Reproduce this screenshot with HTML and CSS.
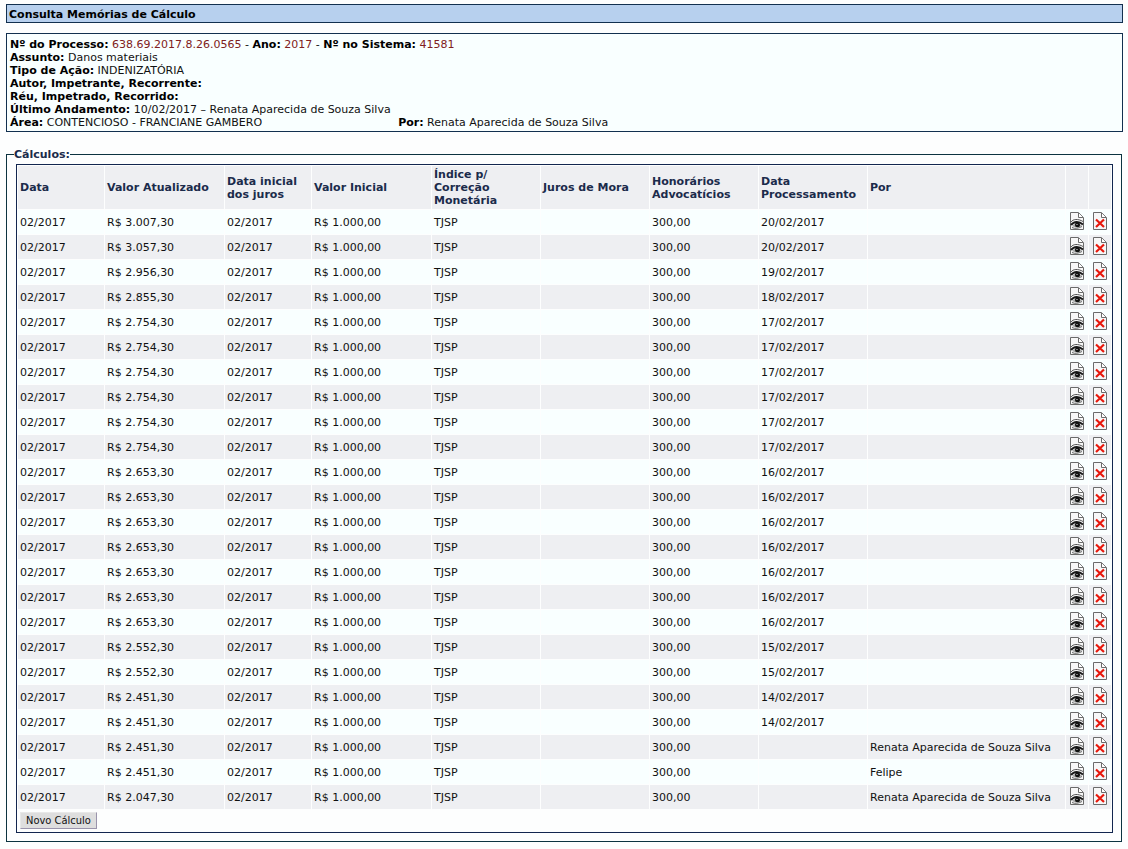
FILE: index.html
```
<!DOCTYPE html>
<html lang="pt-BR">
<head>
    <meta charset="UTF-8">
    <meta name="viewport" content="width=device-width, initial-scale=1.0">
    <title>Consulta Memórias de Cálculo</title>
    <link rel="stylesheet" href="styles.css">
</head>
<body>
    <!-- Ícones usados em cada linha -->
    <svg class="sprite" aria-hidden="true">
        <symbol id="ver" viewBox="0 0 14 18">
            <path d="M.5.5h8l5 5v12H.5z" fill="#f7f7f7" stroke="#6b6b6b"/>
            <path d="M8.5 1v4.500H13" fill="#fff" stroke="#6b6b6b"/>
            <path d="M1 10C3 7 8 6.500 13 9.500" fill="none" stroke="#555"/>
            <path d="M1 13C4 9 9 9 13 12.500" fill="none" stroke="#1a1a1a" stroke-width="2"/>
            <path d="M2 14C4 11 9 11 12 13.500C9 16 5 16 2 14z" fill="#aaa"/>
            <circle cx="7.500" cy="12.800" r="2.500" fill="#111"/>
            <path d="M6.500 12.500h1" stroke="#eee"/>
            <path d="M2 15.500C5 17 8 16.500 12 14.500" fill="none" stroke="#666"/>
        </symbol>
        <symbol id="excluir" viewBox="0 0 14 18">
            <path d="M.5.5h8l5 5v12H.5z" fill="#f7f7f7" stroke="#6b6b6b"/>
            <path d="M8.5 1v4.500H13" fill="#fff" stroke="#6b6b6b"/>
            <path d="M3 7.500l8 7.500M11 7.500L3 15" stroke="#e8180c" stroke-width="2.200"/>
        </symbol>
    </svg>

    <h1>Consulta Memórias de Cálculo</h1>

    <div class="processo">
        <div><b>Nº do Processo:</b> <a href="#">638.69.2017.8.26.0565</a> - <b>Ano:</b> <a href="#">2017</a> - <b>Nº no Sistema:</b> <a href="#">41581</a></div>
        <div><b>Assunto:</b> Danos materiais</div>
        <div><b>Tipo de Ação:</b> INDENIZATÓRIA</div>
        <div><b>Autor, Impetrante, Recorrente:</b></div>
        <div><b>Réu, Impetrado, Recorrido:</b></div>
        <div><b>Último Andamento:</b> 10/02/2017 – Renata Aparecida de Souza Silva</div>
        <div class="area">
            <span><b>Área:</b> CONTENCIOSO - FRANCIANE GAMBERO</span>
            <span><b>Por:</b> Renata Aparecida de Souza Silva</span>
        </div>
    </div>

    <fieldset>
        <legend>Cálculos:</legend>
        <div class="quadro">
            <table>
                <colgroup>
                    <col class="c-data">
                    <col class="c-valor">
                    <col class="c-data">
                    <col class="c-valor">
                    <col class="c-medio">
                    <col class="c-medio">
                    <col class="c-medio">
                    <col class="c-medio">
                    <col>
                    <col class="c-icone">
                    <col class="c-icone">
                </colgroup>
                <thead>
                    <tr>
                        <th>Data</th>
                        <th>Valor Atualizado</th>
                        <th>Data inicial dos juros</th>
                        <th>Valor Inicial</th>
                        <th>Índice p/ Correção Monetária</th>
                        <th>Juros de Mora</th>
                        <th>Honorários Advocatícios</th>
                        <th>Data Processamento</th>
                        <th>Por</th>
                        <th></th>
                        <th></th>
                    </tr>
                </thead>
                <tbody id="calculos"></tbody>
            </table>
            <button type="button">Novo Cálculo</button>
        </div>
    </fieldset>

    <script>
        // valor atualizado, data de processamento, por
        const calculos = [
            ['3.007,30', '20/02/2017', ''],
            ['3.057,30', '20/02/2017', ''],
            ['2.956,30', '19/02/2017', ''],
            ['2.855,30', '18/02/2017', ''],
            ['2.754,30', '17/02/2017', ''],
            ['2.754,30', '17/02/2017', ''],
            ['2.754,30', '17/02/2017', ''],
            ['2.754,30', '17/02/2017', ''],
            ['2.754,30', '17/02/2017', ''],
            ['2.754,30', '17/02/2017', ''],
            ['2.653,30', '16/02/2017', ''],
            ['2.653,30', '16/02/2017', ''],
            ['2.653,30', '16/02/2017', ''],
            ['2.653,30', '16/02/2017', ''],
            ['2.653,30', '16/02/2017', ''],
            ['2.653,30', '16/02/2017', ''],
            ['2.653,30', '16/02/2017', ''],
            ['2.552,30', '15/02/2017', ''],
            ['2.552,30', '15/02/2017', ''],
            ['2.451,30', '14/02/2017', ''],
            ['2.451,30', '14/02/2017', ''],
            ['2.451,30', '', 'Renata Aparecida de Souza Silva'],
            ['2.451,30', '', 'Felipe'],
            ['2.047,30', '', 'Renata Aparecida de Souza Silva']
        ];

        document.getElementById('calculos').innerHTML = calculos.map(([valor, data, por]) => `
            <tr>
                <td>02/2017</td>
                <td>R$ ${valor}</td>
                <td>02/2017</td>
                <td>R$ 1.000,00</td>
                <td>TJSP</td>
                <td></td>
                <td>300,00</td>
                <td>${data}</td>
                <td>${por}</td>
                <td class="icone"><a href="#" aria-label="Visualizar"><svg><use href="#ver"/></svg></a></td>
                <td class="icone"><a href="#" aria-label="Excluir"><svg><use href="#excluir"/></svg></a></td>
            </tr>`).join('');
    </script>
</body>
</html>
```
FILE: styles.css
```
body {
    margin: 4px 5px 4px 6px;
    background-color: #fdfefe;
    color: #111;
    font-family: Verdana, "DejaVu Sans", sans-serif;
    font-size: 11px;
    line-height: 13px;
}
.sprite {
    display: none;
}
h1 {
    margin: 0 0 10px;
    padding: 3px 2px 1px;
    border: 1px solid #12304f;
    background-color: #b7d0ee;
    color: #000;
    font-size: 11px;
    line-height: 13px;
}
.processo {
    padding: 4px 3px 2px;
    border: 1px solid #12304f;
    background-color: #f9ffff;
}
.processo b {
    color: #000;
}
.processo a {
    color: #802020;
    text-decoration: none;
}
.area {
    display: grid;
    grid-template-columns: 35% 65%;
}
fieldset {
    margin: 16px 1px 0 0;
    padding: 3px 8px 8px 9px;
    border: 1px solid #0c3340;
    min-width: 0;
}
legend {
    margin-left: -2px;
    padding: 0;
    color: #1b2b4b;
    font-weight: bold;
}
.quadro {
    padding-bottom: 3px;
    border: 1px solid #12264f;
}
table {
    width: 100%;
    table-layout: fixed;
    border-collapse: separate;
    border-spacing: 1px;
}
.c-data {
    width: 86px;
}
.c-valor {
    width: 119px;
}
.c-medio {
    width: 108px;
}
.c-icone {
    width: 22px;
}
th, td {
    padding: 2px;
    text-align: left;
}
th {
    background-color: #eeeff2;
    color: #1b2b4b;
}
td {
    height: 20px;
    background-color: #f9ffff;
    white-space: nowrap;
}
tr:nth-child(even) td {
    background-color: #eeeff2;
}
.icone {
    padding: 0 0 2px;
    height: 22px;
}
.icone svg {
    display: block;
    width: 14px;
    height: 18px;
    margin: 0 auto;
}
button {
    display: block;
    margin: 2px 0 0 3px;
    padding: 1px 5px;
    border: 1px solid #e8e8e8;
    border-right-color: #9a94ac;
    border-bottom-color: #9a94ac;
    background-color: #dedede;
    color: #111;
    font-family: Tahoma, "DejaVu Sans Condensed", sans-serif;
    font-size: 11px;
    line-height: 13px;
}
```
